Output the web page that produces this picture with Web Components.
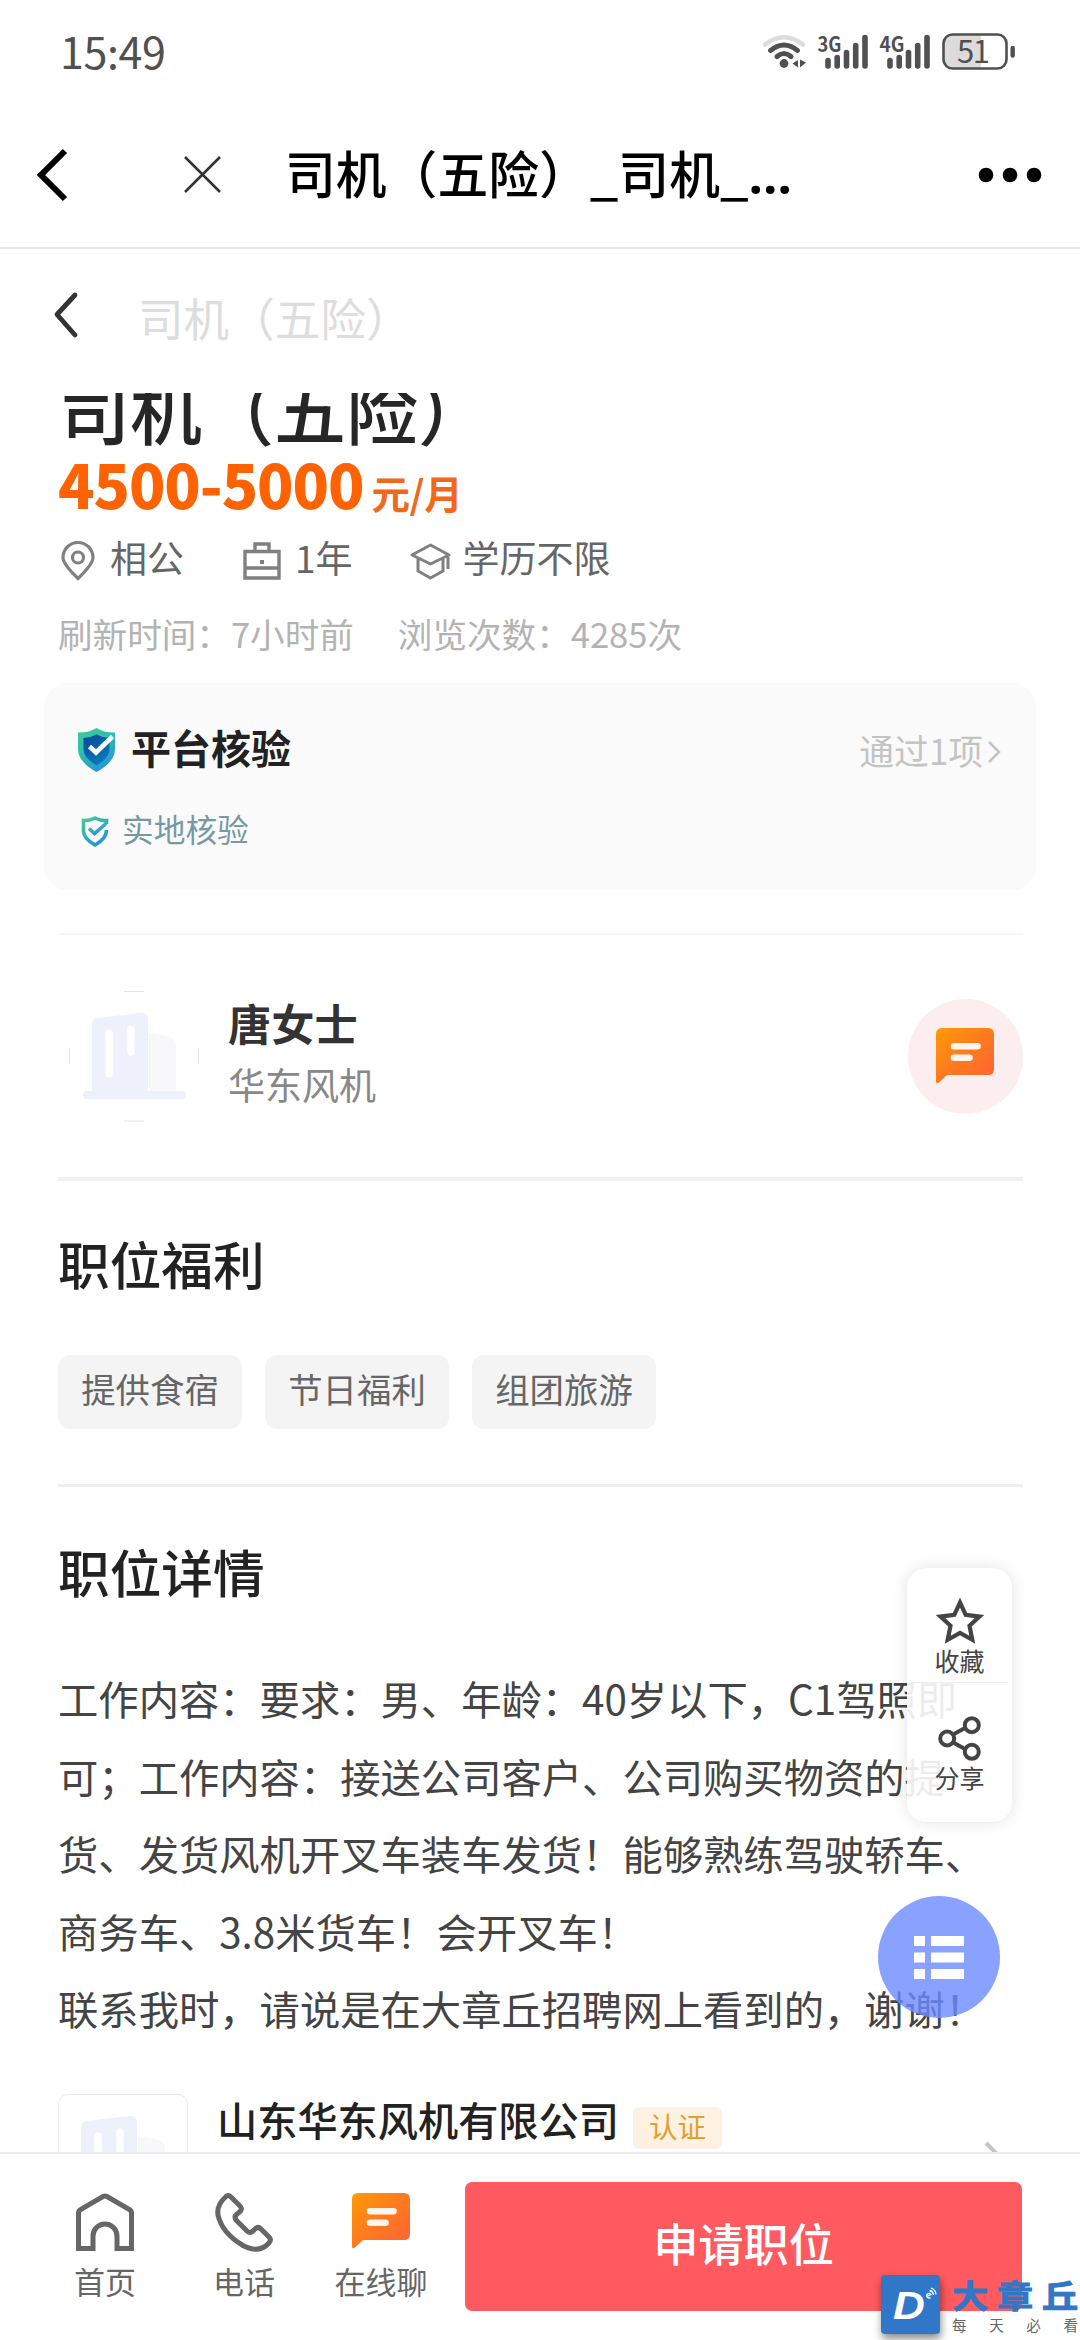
<!DOCTYPE html>
<html lang="zh-CN">
<head>
<meta charset="utf-8">
<title>司机（五险）</title>
<style>
html,body{margin:0;padding:0;background:#fff}
body{width:1080px;height:2340px;overflow:hidden;font-family:"Noto Sans CJK SC",sans-serif;color:#222;text-spacing-trim:space-all}
</style>
</head>
<body>
<job-page></job-page>
<script>
const base='<style>*{box-sizing:border-box}svg{display:block;flex:none;overflow:visible}</style>';
function define(name,html){
  const t=document.createElement('template');
  t.innerHTML=base+html;
  customElements.define(name,class extends HTMLElement{
    constructor(){super();this.attachShadow({mode:'open'}).appendChild(t.content.cloneNode(true));}
  });
}

define('chat-icon',`<style>:host{display:block;width:58px;height:56px}</style>
<svg width="58" height="56" viewBox="0 0 58 56"><defs><linearGradient id="g" x1="0" y1="0" x2="1" y2="1"><stop offset="0" stop-color="#ff9a08"/><stop offset=".45" stop-color="#fd7d1c"/><stop offset="1" stop-color="#ff6038"/></linearGradient></defs>
<path d="M6 0H52Q58 0 58 6V41Q58 47 52 47H11L3 54.500Q0 56.500 0 53V6Q0 0 6 0Z" fill="url(#g)"/>
<path d="M18 18.300H41.500M18 29.700H33.500" stroke="#fff" stroke-opacity=".92" stroke-width="6.600" stroke-linecap="round"/></svg>`);

define('building-logo',`<style>:host{display:block;width:130px;height:130px;flex:none}</style>
<svg width="130" height="130" viewBox="0 0 130 130">
<path d="M80 42L98 45Q107 47 107 54V100H80Z" fill="#f8f8fa"/>
<path d="M23 100V34Q23 28 29 27L71 22Q79 21 79 28V100H113Q117 100 117 104Q117 108 113 108H18Q14 108 14 104Q14 100 18 100Z" fill="#eef0fb"/>
<path d="M40 42V83M62 38.500V61" stroke="#fff" stroke-width="7.500" stroke-linecap="round"/></svg>`);

define('status-bar',`<style>:host{display:flex;height:100px;align-items:center;justify-content:space-between;padding:0 64px 0 60px;color:#505050}
.t{font-size:43px;line-height:50px;letter-spacing:-.4px}svg{margin-top:4px}</style>
<span class="t">15:49</span>
<svg width="254" height="40" viewBox="762 32 254 40" fill="none" stroke="#505050" stroke-linecap="round">
<path d="M765 44.500Q784 30 803 44.500" stroke="#dcdcdc" stroke-width="4.500"/>
<path d="M770.500 50.500Q784 39.500 797.500 50.500M777 56.500Q784 50.500 791 56.500" stroke-width="5"/>
<circle cx="784" cy="63.500" r="4.400" fill="#505050" stroke="none"/>
<path d="M792.500 63.500L798 60V67.500ZM800 59.500L806 62.500L800 67.500Z" fill="#505050" stroke="none"/>
<path d="M828 60.500V66M837.200 57.500V66M846.500 52.500V66M855.700 45.500V66M865 37.500V66" stroke-width="5.600"/>
<path d="M890 60.500V66M899.200 57.500V66M908.500 52.500V66M917.700 45.500V66M927 37.500V66" stroke-width="5.600"/>
<g fill="#505050" stroke="none" font-family="Noto Sans CJK SC, sans-serif"><text x="817.500" y="51.500" font-size="21" font-weight="700" textLength="24" lengthAdjust="spacingAndGlyphs">3G</text><text x="879.500" y="51.500" font-size="21" font-weight="700" textLength="25" lengthAdjust="spacingAndGlyphs">4G</text></g>
<path d="M951 35H981V68H951Q944 68 944 61V42Q944 35 951 35Z" fill="#dcdcdc" stroke="none"/>
<rect x="943.500" y="34.500" width="63" height="34" rx="9" stroke-width="2.600"/>
<path d="M1012.700 48V55.500" stroke-width="4.400"/>
<text x="957" y="62.500" font-size="31" fill="#505050" stroke="none" font-family="Noto Sans CJK SC, sans-serif" textLength="33">51</text>
</svg>`);

define('app-bar',`<style>:host{display:flex;height:149px;align-items:center;border-bottom:2px solid #e8e8e8;color:#000;padding:2px 38px 0 37px}
.c{margin-left:118px}.t{font-size:50.800px;font-weight:500;margin-left:65px;flex:1;line-height:70px;margin-top:-3px;white-space:nowrap}</style>
<svg width="30" height="54" viewBox="0 0 30 54" fill="none" stroke="#000" stroke-width="6"><path d="M28 3L4 27L28 51"/></svg>
<svg class="c" width="35" height="35" viewBox="0 0 35 35" stroke="#333" stroke-width="2.500"><path d="M0 0L35 35M35 0L0 35"/></svg>
<span class="t"><slot></slot></span>
<svg width="64" height="16" viewBox="0 0 64 16"><circle cx="8" cy="8" r="7.300"/><circle cx="32" cy="8" r="7.300"/><circle cx="56" cy="8" r="7.300"/></svg>`);

define('page-bar',`<style>:host{display:flex;height:144px;align-items:center;padding:0 0 12px 54px;color:#ddd;font-size:45.600px;line-height:60px}span{margin:3px 0 0 60px}</style>
<svg width="24" height="46" viewBox="0 0 24 46" fill="none" stroke="#333" stroke-width="4.800" stroke-linecap="round" stroke-linejoin="round"><path d="M21 3L3 22.500L21 43"/></svg><span><slot></slot></span>`);

define('job-summary',`<style>:host{display:block;padding:0 58px}
h1{font-size:72px;line-height:88px;font-weight:500;margin:-29px 0 0;height:88px;color:#262626}
.s{height:62px;line-height:62px;color:#ff6200;font-weight:700;display:flex;align-items:baseline}
.s b{font-size:60px;letter-spacing:-1.100px}.s i{font-style:normal;font-size:38.500px;line-height:1;margin-left:8px;font-weight:700;color:#f2681a;letter-spacing:-.3px}
.m{display:flex;height:86px;align-items:center;font-size:37px;line-height:54px;color:#666}
.m svg{margin-top:8px}.m svg+span{margin-left:15px}
.d{display:flex;height:66px;align-items:center;font-size:34.600px;color:#b3b3b3;line-height:50px;gap:44px}</style>
<h1><slot></slot></h1>
<div class="s"><b>4500-5000</b><i>元/月</i></div>
<div class="m">
<svg style="margin-left:3px" width="34" height="40" viewBox="0 0 34 40" fill="none" stroke="#808080" stroke-width="3.200"><path d="M17 37.500Q2 23 2 16.500A15 15 0 0 1 32 16.500Q32 23 17 37.500Z"/><circle cx="17" cy="16.500" r="5.500"/></svg><span>相公</span>
<svg style="margin-left:59px" width="38" height="38" viewBox="0 0 38 38" fill="none" stroke="#808080" stroke-width="3.400"><path d="M2 9.500H36V36H2ZM12 9V2H26V9M2 26H36"/><path d="M19 18V22" stroke-width="4"/></svg><span style="margin-left:14px">1年</span>
<svg style="margin-left:57px" width="41" height="38" viewBox="0 0 41 38" fill="none" stroke="#808080" stroke-width="3" stroke-linejoin="round"><path d="M20.500 3L39 13L20.500 22L2 13ZM8 17V29L20.500 36L33 29V17M38 15V27"/></svg><span style="margin-left:12px">学历不限</span>
</div>
<div class="d"><span>刷新时间：7小时前</span><span>浏览次数：4285次</span></div>`);

define('verify-card',`<style>:host{display:block;margin:17px 44px 0;height:207px;border-radius:24px;background:#fafafa;padding:37px 36px 0 33px}
div{display:flex;align-items:center;height:54px;line-height:54px}.a b{font-size:40px;margin-left:15px;color:#222}.a span{margin-left:auto;font-size:34.800px;color:#c4c4c4;margin-top:5px}.a .v{margin:10px 0 0 5px}
.b{margin-top:27px;font-size:31.700px;color:#7799a2}.b span{margin-left:13px}.a svg,.b svg{margin-top:6px}</style>
<div class="a"><svg width="39" height="44" viewBox="0 0 39 44"><defs><linearGradient id="o" x1="0" y1="0" x2=".5" y2="1"><stop offset="0" stop-color="#44cc94"/><stop offset=".5" stop-color="#2bbdb0"/><stop offset="1" stop-color="#2796d8"/></linearGradient><linearGradient id="i" x1="0" y1="0" x2=".6" y2="1"><stop offset="0" stop-color="#06479b"/><stop offset="1" stop-color="#087cb9"/></linearGradient></defs>
<path d="M19.500 0Q28 5 38 4.500V21Q38 34 19.500 44Q1 34 1 21V4.500Q11 5 19.500 0Z" fill="url(#o)"/><path d="M19.500 6.500Q26 10 32.500 10V21Q32.500 30 19.500 37.500Q6.500 30 6.500 21V10Q13 10 19.500 6.500Z" fill="url(#i)"/><path d="M12.500 18.500L19 24.500L35.500 8.500" fill="none" stroke="#fff" stroke-width="4.600"/></svg><b>平台核验</b><span>通过1项</span><svg class="v" width="12" height="22" viewBox="0 0 12 22" fill="none" stroke="#c4c4c4" stroke-width="2.500"><path d="M1 1L11 11L1 21"/></svg></div>
<div class="b"><svg style="margin-left:4px" width="28" height="31" viewBox="0 0 28 31" fill="none"><defs><linearGradient id="q" x1="0" y1="0" x2=".6" y2="1"><stop offset="0" stop-color="#43cc94"/><stop offset="1" stop-color="#2796d8"/></linearGradient></defs><path d="M25.500 8V4.500Q20 5 14 2Q8 5 2.500 4.500V15Q2.500 22.500 14 29Q25.500 22.500 25.500 14" stroke="url(#q)" stroke-width="3.600"/><path d="M8 12.500L13.500 17.500L25 7.500" stroke="url(#q)" stroke-width="3.600"/></svg><span>实地核验</span></div>`);

define('recruiter-row',`<style>:host{display:flex;height:242px;align-items:center;padding:0 57.500px 0 69px}
.p{position:relative;width:130px;height:130px}.p building-logo{margin:0}.p svg{position:absolute;inset:0}
.n{margin:3px 0 0 29px;flex:1;line-height:62px}.n b{display:block;font-size:43.200px;color:#333}.n span{font-size:37px;color:#888}
.c{width:115px;height:115px;border-radius:50%;background:#fceeee;display:flex;align-items:center;justify-content:center}</style>
<div class="p"><building-logo></building-logo><svg width="130" height="130" fill="none" stroke="#e4e4e4"><path d="M55 .5H75M55 130H75M.5 57V73M129.500 57V73"/></svg></div>
<div class="n"><b><slot name="name"></slot></b><span><slot name="company"></slot></span></div>
<div class="c"><chat-icon></chat-icon></div>`);

define('section-title',`<style>:host{display:flex;align-items:center;height:160px;padding:3px 58px 0;box-sizing:border-box;font-size:51.700px;line-height:60px;font-weight:500;color:#222}</style><slot></slot>`);
define('rule-line',`<style>:host{display:block;height:3px;margin:0 57px 0 58px;background:#efefef}</style>`);
define('tag-chip',`<style>:host{display:flex;width:184px;height:74px;border-radius:12px;background:#f4f4f4;align-items:center;justify-content:center;font-size:34.400px;line-height:50px;color:#666;padding-bottom:8px;box-sizing:border-box;white-space:nowrap}</style><slot></slot>`);

define('company-row',`<style>:host{display:flex;margin:47px 57px 0 58px;align-items:flex-start;height:130px}
.l{width:130px;height:130px;border:1.500px solid #e9e9e9;border-radius:10px;flex:none}.l building-logo{margin:-1px}
.t{font-size:40.200px;line-height:50px;font-weight:500;color:#222;margin-left:29px}
.g{margin:13px 0 0 14px;width:89px;height:42px;border-radius:6px;background:#fdf1e1;color:#dfa02c;font-size:28.500px;line-height:37px;text-align:center}
.v{margin:48px 22px 0 auto}</style>
<div class="l"><building-logo></building-logo></div><span class="t"><slot></slot></span><span class="g">认证</span>
<svg class="v" width="16" height="28" viewBox="0 0 16 28" fill="none" stroke="#c4c4c4" stroke-width="4"><path d="M1 1L14 14L1 27"/></svg>`);

define('quick-panel',`<style>:host{display:flex;flex-direction:column;width:105px;height:254px;border-radius:20px;background:rgba(255,255,255,.9);box-shadow:0 0 16px rgba(0,0,0,.12);font-size:25px;color:#444;line-height:32px}
div{display:flex;flex-direction:column;align-items:center}.a{height:115px;padding-top:30px;border-bottom:1.500px solid #eee;margin:0 4px}.b{padding-top:33px}.a span,.b span{margin-top:0}</style>
<div class="a"><svg width="48" height="46" viewBox="0 0 48 46" fill="none" stroke="#444" stroke-width="4.200"><path d="M24 4.500L29.700 16.800L43.500 18.600L33.500 27.700L36.300 41.800L24 35L11.700 41.800L14.500 27.700L4.500 18.600L18.300 16.800Z"/></svg><span>收藏</span></div>
<div class="b"><svg width="43" height="45" viewBox="0 0 43 45" fill="none" stroke="#444" stroke-width="4"><path d="M16 18L27 12M16 27L27 33"/><circle cx="9.200" cy="22.500" r="7"/><circle cx="33.800" cy="9.200" r="7"/><circle cx="33.800" cy="35.800" r="7"/></svg><span>分享</span></div>`);

define('list-fab',`<style>:host{display:flex;width:122px;height:122px;border-radius:50%;background:rgba(109,139,255,.8);align-items:center;justify-content:center}</style>
<svg width="50" height="43" viewBox="0 0 50 43" fill="#fff"><path d="M0 0H11V10H0ZM17 0H50V10H17ZM0 16.500H11V26.500H0ZM17 16.500H50V26.500H17ZM0 33H11V43H0ZM17 33H50V43H17Z"/></svg>`);

define('nav-item',`<style>:host{display:flex;flex-direction:column;align-items:center;font-size:31px;line-height:40px;color:#666}div{height:58px}.l{margin-top:10px;white-space:nowrap}</style><div><slot name="icon"></slot></div><span class="l"><slot></slot></span>`);

define('bottom-bar',`<style>:host{display:flex;height:188px;border-top:2px solid #ebebeb;background:#fff;padding:0 58px 0 58px;align-items:flex-start}
nav-item{margin-top:39px}
button{all:unset;display:flex;align-items:center;justify-content:center;width:557px;height:129px;border-radius:7px;background:#ff5a5f;color:#fff;font-size:45.200px;font-weight:500;line-height:60px;margin:28px 0 0 auto;padding-bottom:8px;box-sizing:border-box}</style>
<nav-item style="width:94px"><svg slot="icon" width="58" height="58" viewBox="0 0 58 58" fill="none" stroke="#666" stroke-width="5"><path d="M2.500 55.500V20Q2.500 18 4.500 16.700L27 3.500Q29 2.500 31 3.500L53.500 16.700Q55.500 18 55.500 20V55.500H41V43A12 12 0 0 0 17 43V55.500Z"/></svg>首页</nav-item>
<nav-item style="width:94px;margin-left:45px"><svg slot="icon" width="58" height="58" viewBox="0 0 58 58" fill="none" stroke="#666" stroke-width="5" stroke-linejoin="round"><path d="M10.500 4Q13 1 16 4L25 13Q28 16 24.500 19L22 21Q18.500 24 21.500 27.500L32 38Q34.500 41 38 38L40 36Q43 33 46 36L54.500 44.500Q56.500 47 54 50Q44 61 28 52.500Q7 40 3 22Q1.500 12 10.500 4Z"/></svg>电话</nav-item>
<nav-item style="width:94px;margin-left:43px"><chat-icon slot="icon"></chat-icon>在线聊</nav-item>
<button>申请职位</button>`);

define('brand-mark',`<style>:host{display:flex;width:199px;height:65px;gap:12px}
.q{position:relative;width:59px;height:59px;border-radius:4px;background:#3077ca;box-shadow:1px 5px 8px rgba(0,0,0,.45);color:#fff;flex:none}
.d{position:absolute;left:12px;top:13px;font:italic 700 38px/36px "Liberation Sans",sans-serif;transform:scaleX(1.16);transform-origin:0 0}
.q svg{position:absolute;left:44px;top:11px}
.w{width:126px}.n,.s{display:flex;justify-content:space-between;white-space:nowrap}
.n{font-size:32px;line-height:36px;height:41px;padding-top:1px;font-weight:700;color:#3276c5;-webkit-text-stroke:1px #3276c5}.n span{transform:scaleX(1.13)}.n{padding-left:2px;padding-right:2px}
.s{font-size:14.500px;line-height:17px;color:#666}</style>
<div class="q"><span class="d">D</span><svg width="14" height="14" viewBox="0 0 14 14" fill="none" stroke="#fff" stroke-width="1.300"><path d="M2 10.500L6 8.500A2.300 2.300 0 1 0 5.500 11.500M4.500 4.500Q8 5 8.500 9M6 2Q10.500 3.500 11 8.500"/></svg></div>
<div class="w"><div class="n"><span>大</span><span>章</span><span>丘</span></div><div class="s"><span>每</span><span>天</span><span>必</span><span>看</span></div></div>`);

define('job-page',`<style>:host{display:flex;flex-direction:column;position:relative;width:1080px;height:2340px;overflow:hidden;background:#fff}
main{flex:1;min-height:0;overflow:hidden}
.e{font-family:"Open Sans",sans-serif;font-weight:700}
.tags{display:flex;gap:23px;padding:14px 58px 55px}
p{margin:8px 58px 0 58px;font-size:40.320px;line-height:77.600px;color:#444;white-space:nowrap}
quick-panel{position:absolute;left:907px;top:1568px}list-fab{position:absolute;left:878px;top:1896px}brand-mark{position:absolute;left:881px;top:2275px}</style>
<status-bar></status-bar><app-bar>司机（五险）_司机_<span class="e">…</span></app-bar><page-bar>司机（五险）</page-bar>
<main>
<job-summary>司机（五险）</job-summary>
<verify-card></verify-card>
<rule-line style="margin-top:43px;height:2px;background:#f5f5f5"></rule-line>
<recruiter-row><span slot="name">唐女士</span><span slot="company">华东风机</span></recruiter-row>
<rule-line style="height:4px;background:#f1f1f1"></rule-line>
<section-title>职位福利</section-title>
<div class="tags"><tag-chip>提供食宿</tag-chip><tag-chip>节日福利</tag-chip><tag-chip>组团旅游</tag-chip></div>
<rule-line></rule-line>
<section-title style="height:164px">职位详情</section-title>
<p>工作内容：要求：男、年龄：40岁以下，C1驾照即<br>可；工作内容：接送公司客户、公司购买物资的提<br>货、发货风机开叉车装车发货！能够熟练驾驶轿车、<br>商务车、3.8米货车！会开叉车！<br>联系我时，请说是在大章丘招聘网上看到的，谢谢！</p>
<company-row>山东华东风机有限公司</company-row>
</main>
<bottom-bar></bottom-bar>
<quick-panel></quick-panel><list-fab></list-fab><brand-mark></brand-mark>`);
</script>
</body>
</html>
